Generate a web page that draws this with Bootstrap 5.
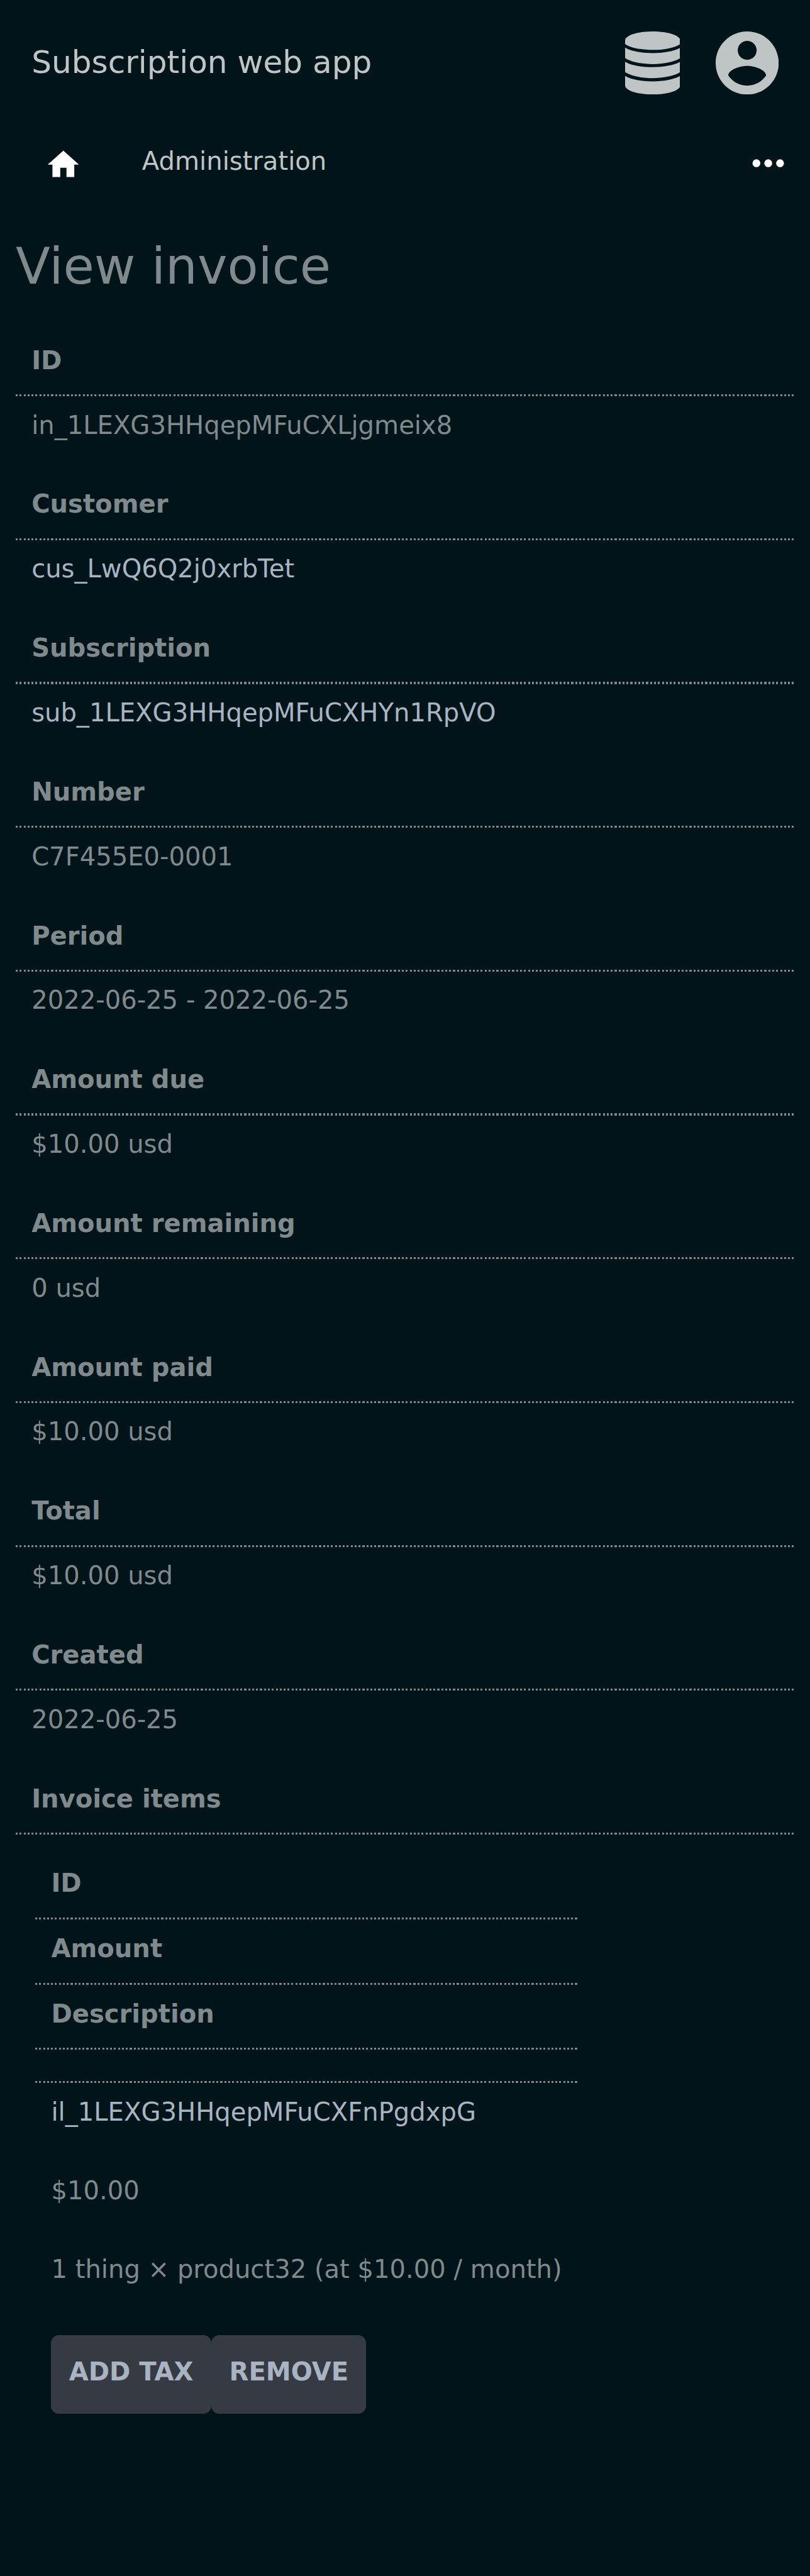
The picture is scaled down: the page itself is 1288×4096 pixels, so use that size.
<!DOCTYPE html>
<html lang="en">
<head>
<meta charset="utf-8">
<meta name="viewport" content="width=device-width, initial-scale=1">
<title>View invoice</title>
<link href="https://cdn.jsdelivr.net/npm/bootstrap@5.3.0/dist/css/bootstrap.min.css" rel="stylesheet">
<style>
  :root { --u: 3.1332px; }
  body {
    font-family: "DejaVu Sans", sans-serif;
    font-size: calc(12.8 * var(--u));
    line-height: calc(20 * var(--u));
    background: #001419;
    color: #80898c;
    min-height: 4096px;
    font-kerning: normal;
  }
  a { color: #a9b4c2; text-decoration: none; }
  svg { display: block; flex: none; }
  .topbar { height: calc(64 * var(--u)); padding: 0 calc(16 * var(--u)); color: #bfc4c5; }
  .topbar a, .menubar a { color: #bfc4c5; }
  .app-name { font-size: calc(16 * var(--u)); line-height: calc(24 * var(--u)); padding-bottom: calc(.8 * var(--u)); }
  .top-icons { gap: calc(16 * var(--u)); }
  .icon-slot { width: calc(32 * var(--u)); height: calc(32 * var(--u)); }
  .menubar { height: calc(55 * var(--u)); padding: calc(7 * var(--u)) calc(9.1 * var(--u)) 0 calc(22.6 * var(--u)); }
  .home-link { padding-top: calc(2.9 * var(--u)); margin-right: calc(30.5 * var(--u)); }
  .menu-link { padding-top: calc(.75 * var(--u)); }
  .page-title { font-size: calc(25.6 * var(--u)); line-height: calc(32 * var(--u)); font-weight: 400; height: calc(53.12 * var(--u)); padding: calc(.4 * var(--u)) 0 0 calc(8 * var(--u)); color: inherit; }
  .details { padding: 0 calc(8 * var(--u)); }
  .details dt { font-weight: 700; height: calc(28 * var(--u)); padding: calc(.8 * var(--u)) calc(8 * var(--u)) 0; }
  .details dd { height: calc(44 * var(--u)); padding: calc(4.62 * var(--u)) calc(8 * var(--u)) 0; }
  .dotted { height: calc(1 * var(--u)); background: repeating-linear-gradient(90deg, #80898c 0 3.13px, transparent 3.13px 6.2656px); }
  .details dd.items { height: auto; padding: calc(10.1 * var(--u)) 0 0 calc(10 * var(--u)); }
  .item-table { width: calc(274.9 * var(--u)); }
  .item-head { height: calc(32.05 * var(--u)); padding: calc(4.7 * var(--u)) calc(8 * var(--u)) 0; font-weight: 700; }
  .item-head.blank { height: calc(15.8 * var(--u)); padding: 0; }
  .item-cell { height: calc(40 * var(--u)); padding: calc(4.7 * var(--u)) calc(8 * var(--u)) 0; }
  .item-actions { padding: calc(8 * var(--u)) calc(8 * var(--u)) 0; gap: calc(.25 * var(--u)); }
  .item-actions .btn {
    --bs-btn-bg: #363a42; --bs-btn-color: #a9b4c2; --bs-btn-hover-bg: #40454e; --bs-btn-hover-color: #a9b4c2;
    height: calc(39.8 * var(--u)); padding: calc(8.5 * var(--u)) calc(9 * var(--u)) 0; border: 0;
    border-radius: calc(4 * var(--u)); font-size: inherit; line-height: inherit; font-weight: 700;
  }
</style>
<script src="https://cdn.jsdelivr.net/npm/bootstrap@5.3.0/dist/js/bootstrap.bundle.min.js"></script>
</head>
<body>
<header class="topbar d-flex align-items-center justify-content-between">
  <a class="app-name" href="#">Subscription web app</a>
  <div class="top-icons d-flex">
    <a class="icon-slot d-flex justify-content-center" href="#" aria-label="Administrator">
      <svg class="h-100" viewBox="0 0 448 512" fill="currentColor"><path d="M448 73.143v28.571C400 135 310 150 224 150S48 135 0 101.714V73.143C0 32.714 100.333 0 224 0s224 32.714 224 73.143zM0 132C48 161 136 176 224 176S400 161 448 132V216C400 249 310 265 224 265S48 249 0 216zM0 246C48 275 136 290 224 290S400 275 448 246V330C400 363 310 379 224 379S48 363 0 330zM0 361C48 390 136 406 224 406S400 390 448 361V438.857C448 479.286 347.667 512 224 512S0 479.286 0 438.857z"/></svg>
    </a>
    <a class="icon-slot" href="#" aria-label="Account">
      <svg class="w-100 h-100" viewBox="0 0 20 20" fill="currentColor"><path d="M10 0C4.480 0 0 4.480 0 10s4.480 10 10 10 10-4.480 10-10S15.520 0 10 0zm0 3c1.660 0 3 1.340 3 3s-1.340 3-3 3-3-1.340-3-3 1.340-3 3-3zm0 14.200c-2.500 0-4.710-1.280-6-3.220.03-1.990 4-3.080 6-3.080 1.990 0 5.970 1.090 6 3.080-1.290 1.940-3.500 3.220-6 3.220z"/></svg>
    </a>
  </div>
</header>
<nav class="menubar d-flex align-items-start">
  <a class="home-link" href="#" aria-label="Home"><svg width="59.5" height="59.5" viewBox="0 0 24 24" fill="#fff"><path d="M10 20v-6h4v6h5v-8h3L12 3 2 12h3v8z"/></svg></a>
  <a class="menu-link" href="#">Administration</a>
  <a class="ms-auto" href="#" aria-label="More"><svg width="75.200" height="75.200" viewBox="0 0 24 24" fill="#fff"><circle cx="6" cy="12" r="2"/><circle cx="12" cy="12" r="2"/><circle cx="18" cy="12" r="2"/></svg></a>
</nav>
<main>
  <h1 class="page-title m-0">View invoice</h1>
  <dl class="details m-0">
    <dt>ID</dt><div class="dotted"></div><dd class="m-0">in_1LEXG3HHqepMFuCXLjgmeix8</dd>
    <dt>Customer</dt><div class="dotted"></div><dd class="m-0"><a href="#">cus_LwQ6Q2j0xrbTet</a></dd>
    <dt>Subscription</dt><div class="dotted"></div><dd class="m-0"><a href="#">sub_1LEXG3HHqepMFuCXHYn1RpVO</a></dd>
    <dt>Number</dt><div class="dotted"></div><dd class="m-0">C7F455E0-0001</dd>
    <dt>Period</dt><div class="dotted"></div><dd class="m-0">2022-06-25 - 2022-06-25</dd>
    <dt>Amount due</dt><div class="dotted"></div><dd class="m-0">$10.00 usd</dd>
    <dt>Amount remaining</dt><div class="dotted"></div><dd class="m-0">0 usd</dd>
    <dt>Amount paid</dt><div class="dotted"></div><dd class="m-0">$10.00 usd</dd>
    <dt>Total</dt><div class="dotted"></div><dd class="m-0">$10.00 usd</dd>
    <dt>Created</dt><div class="dotted"></div><dd class="m-0">2022-06-25</dd>
    <dt>Invoice items</dt><div class="dotted"></div>
    <dd class="items m-0">
      <div class="item-table">
        <div class="item-head">ID</div><div class="dotted"></div>
        <div class="item-head">Amount</div><div class="dotted"></div>
        <div class="item-head">Description</div><div class="dotted"></div>
        <div class="item-head blank"></div><div class="dotted"></div>
        <div class="item-cell"><a href="#">il_1LEXG3HHqepMFuCXFnPgdxpG</a></div>
        <div class="item-cell">$10.00</div>
        <div class="item-cell text-nowrap">1 thing × product32 (at $10.00 / month)</div>
        <div class="item-actions d-flex">
          <button type="button" class="btn text-uppercase text-nowrap d-flex">Add tax</button>
          <button type="button" class="btn text-uppercase text-nowrap d-flex">Remove</button>
        </div>
      </div>
    </dd>
  </dl>
</main>
</body>
</html>
